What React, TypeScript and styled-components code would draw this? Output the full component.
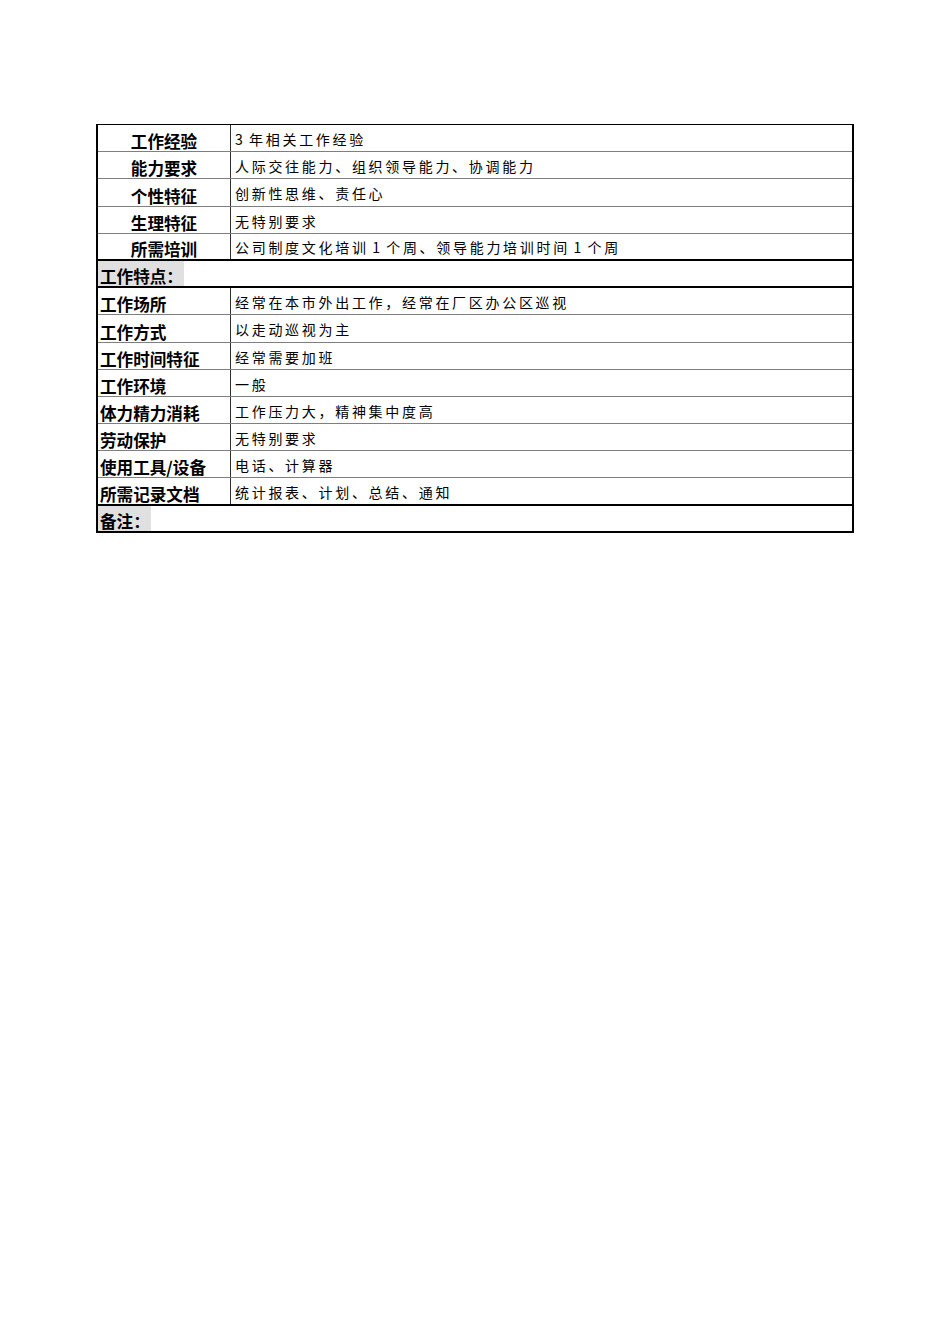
import React from 'react';
import styled, { createGlobalStyle } from 'styled-components';

const GlobalStyle = createGlobalStyle`
  html, body {
    margin: 0;
    padding: 0;
    background: #ffffff;
  }
  body {
    font-family: "Noto Sans CJK SC", "Liberation Sans", sans-serif;
    color: #000000;
  }
`;

const Page = styled.div`
  width: 950px;
  min-height: 1344px;
  padding: 124px 0 0 96px;
  box-sizing: border-box;
`;

const Sheet = styled.div`
  width: 758px;
  box-sizing: border-box;
  border-top: 1px solid #000000;
  border-left: 2px solid #000000;
  border-right: 2px solid #000000;
  display: flex;
  flex-direction: column;
`;

const Row = styled.div<{ $heavy?: boolean }>`
  display: grid;
  grid-template-columns: 133px 1fr;
  height: 27.2px;
  box-sizing: border-box;
  border-bottom: ${(p) => (p.$heavy ? '2px solid #000000' : '1px solid #7f7f7f')};
`;

const Label = styled.div<{ $center?: boolean }>`
  display: flex;
  align-items: flex-end;
  justify-content: ${(p) => (p.$center ? 'center' : 'flex-start')};
  padding-left: ${(p) => (p.$center ? '0' : '2px')};
  border-right: 1px solid #303030;
  font-size: 16.6px;
  font-weight: 700;
  line-height: 19px;
  white-space: nowrap;
`;

const Value = styled.div`
  display: flex;
  align-items: center;
  padding: 2px 0 0 4px;
  font-size: 14px;
  font-weight: 400;
  letter-spacing: 2.7px;
  line-height: 16px;
  white-space: nowrap;
`;

const SectionRow = styled.div`
  display: flex;
  align-items: stretch;
  height: 27.2px;
  box-sizing: border-box;
  border-bottom: 2px solid #000000;
`;

const SectionTitle = styled.span`
  display: flex;
  align-items: flex-end;
  background: #e0e0e0;
  padding: 0 1px 0 2px;
  font-size: 16.6px;
  font-weight: 700;
  line-height: 19px;
  white-space: nowrap;
`;

// hair spaces around the digits, as in the sheet
const hs = '\u200A';

const requirements = [
  ['工作经验', `3${hs}年相关工作经验`],
  ['能力要求', '人际交往能力、组织领导能力、协调能力'],
  ['个性特征', '创新性思维、责任心'],
  ['生理特征', '无特别要求'],
  ['所需培训', `公司制度文化培训${hs}1${hs}个周、领导能力培训时间${hs}1${hs}个周`],
];

const features = [
  ['工作场所', '经常在本市外出工作，经常在厂区办公区巡视'],
  ['工作方式', '以走动巡视为主'],
  ['工作时间特征', '经常需要加班'],
  ['工作环境', '一般'],
  ['体力精力消耗', '工作压力大，精神集中度高'],
  ['劳动保护', '无特别要求'],
  ['使用工具/设备', '电话、计算器'],
  ['所需记录文档', '统计报表、计划、总结、通知'],
];

export default function App() {
  return (
    <>
      <GlobalStyle />
      <Page>
        <Sheet>
          {requirements.map(([label, value], i) => (
            <Row key={label} $heavy={i === requirements.length - 1}>
              <Label $center>{label}</Label>
              <Value>{value}</Value>
            </Row>
          ))}
          <SectionRow>
            <SectionTitle>工作特点：</SectionTitle>
          </SectionRow>
          {features.map(([label, value], i) => (
            <Row key={label} $heavy={i === features.length - 1}>
              <Label>{label}</Label>
              <Value>{value}</Value>
            </Row>
          ))}
          <SectionRow>
            <SectionTitle>备注：</SectionTitle>
          </SectionRow>
        </Sheet>
      </Page>
    </>
  );
}
